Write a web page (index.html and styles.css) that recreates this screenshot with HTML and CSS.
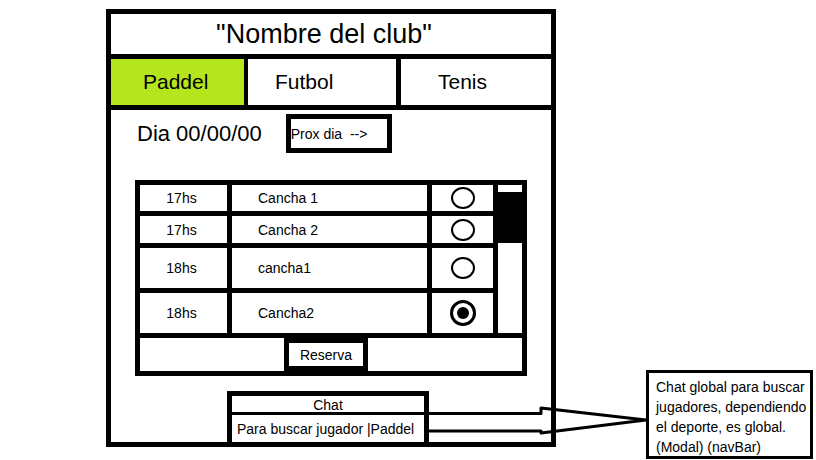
FILE: index.html
```html
<!DOCTYPE html>
<html lang="es">
<head>
    <meta charset="UTF-8">
    <meta name="viewport" content="width=device-width, initial-scale=1.0">
    <title>Reserva de canchas</title>
    <link rel="stylesheet" href="styles.css">
</head>
<body>
    <div class="frame">
        <header class="title">"Nombre del club"</header>
        <nav class="tabs">
            <div class="tab tab-paddel active">Paddel</div>
            <div class="tab tab-futbol">Futbol</div>
            <div class="tab tab-tenis">Tenis</div>
        </nav>
        <main class="content">
            <div class="day-row">
                <span class="day">Dia 00/00/00</span>
                <div class="next-day">Prox dia&nbsp; --&gt;</div>
            </div>

            <div class="slots">
                <div class="scroll"><div class="thumb"></div></div>

                <div class="hour">17hs</div>
                <div class="court">Cancha 1</div>
                <div class="pick"><span class="radio"></span></div>

                <div class="hour">17hs</div>
                <div class="court">Cancha 2</div>
                <div class="pick"><span class="radio"></span></div>

                <div class="hour">18hs</div>
                <div class="court">cancha1</div>
                <div class="pick"><span class="radio"></span></div>

                <div class="hour">18hs</div>
                <div class="court">Cancha2</div>
                <div class="pick"><span class="radio checked"></span></div>

                <div class="reserve-row">
                    <div class="reserve">Reserva</div>
                </div>
            </div>

            <div class="chat">
                <div class="chat-head">Chat</div>
                <div class="chat-body">Para buscar jugador |Paddel</div>
            </div>
        </main>
    </div>

    <!-- annotation -->
    <svg class="arrow" width="225" height="40" viewBox="0 0 225 40">
        <path d="M4 13.5 H116 V8 L221 20 L116 33 V31 H4" fill="none" stroke="#000" stroke-width="3" stroke-linejoin="round"/>
    </svg>
    <div class="note">
        Chat global para buscar<br>
        jugadores, dependiendo<br>
        el deporte, es global.<br>
        (Modal) (navBar)
    </div>
</body>
</html>
```

FILE: styles.css
```css
body {
    font-family: "Liberation Sans", Arial, sans-serif;
    margin: 0;
    padding: 0;
    background: #fff;
    color: #000;
}

.frame {
    width: 440px;
    margin: 9px 0 0 106px;
    border: 5px solid #000;
}

.title {
    height: 40px;
    border-bottom: 5px solid #000;
    display: flex;
    align-items: center;
    justify-content: center;
    padding-right: 14px;
    font-size: 27px;
}

.tabs {
    display: flex;
    height: 46px;
    border-bottom: 5px solid #000;
}

.tab {
    display: flex;
    align-items: center;
    box-sizing: border-box;
    font-size: 21px;
}

.tab-paddel {
    width: 133px;
    padding-left: 32px;
}

.tab-futbol {
    width: 152px;
    border-left: 4px solid #000;
    padding-left: 27px;
}

.tab-tenis {
    flex: 1;
    border-left: 5px solid #000;
    padding-left: 37px;
}

.tab.active {
    background-color: #b5e61d;
}

.day-row {
    display: flex;
    align-items: center;
    gap: 24px;
    margin: 4px 0 0 26px;
}

.day {
    font-size: 22px;
}

.next-day {
    width: 96px;
    height: 29px;
    border: 5px solid #000;
    display: flex;
    align-items: center;
    font-size: 14px;
}

.slots {
    display: grid;
    grid-template-columns: 87px 195px 61px 24px;
    grid-template-rows: 26px 27px 40px 40px 33px;
    gap: 5px;
    padding: 5px;
    width: 382px;
    margin: 27px 0 0 24px;
    background: #000;
    font-size: 14px;
}

.hour,
.court,
.pick,
.reserve-row,
.scroll {
    background: #fff;
    display: flex;
    align-items: center;
}

.hour {
    justify-content: center;
    padding-right: 4px;
}

.court {
    padding-left: 26px;
}

.pick {
    justify-content: center;
}

.radio {
    width: 20px;
    height: 18px;
    border: 2px solid #000;
    border-radius: 50%;
    display: flex;
    align-items: center;
    justify-content: center;
}

.radio.checked {
    width: 20px;
    height: 20px;
    border-width: 3px;
}

.radio.checked::after {
    content: "";
    width: 12px;
    height: 12px;
    border-radius: 50%;
    background: #000;
}

.scroll {
    grid-column: 4;
    grid-row: 1 / span 4;
    flex-direction: column;
    align-items: stretch;
}

.thumb {
    margin-top: 7px;
    height: 51px;
    background: #000;
}

.reserve-row {
    grid-column: 1 / -1;
    justify-content: center;
    align-items: stretch;
}

.reserve {
    width: 74px;
    margin-right: 10px;
    border: 5px solid #000;
    display: flex;
    align-items: center;
    justify-content: center;
}

.chat {
    width: 192px;
    margin: 15px 0 0 116px;
    border: 5px solid #000;
    border-bottom: none;
    font-size: 14px;
}

.chat-head {
    height: 14px;
    padding-top: 2px;
    line-height: 14px;
    text-align: center;
    border-bottom: 3px solid #000;
}

.chat-body {
    height: 27px;
    display: flex;
    align-items: center;
    padding-left: 5px;
}

/* side note and its arrow */
.arrow {
    position: absolute;
    left: 425px;
    top: 400px;
}

.note {
    position: absolute;
    left: 646px;
    top: 370px;
    width: 154px;
    height: 79px;
    padding: 4px 0 0 7px;
    border: 3px solid #000;
    font-size: 14px;
    line-height: 20px;
}
```
